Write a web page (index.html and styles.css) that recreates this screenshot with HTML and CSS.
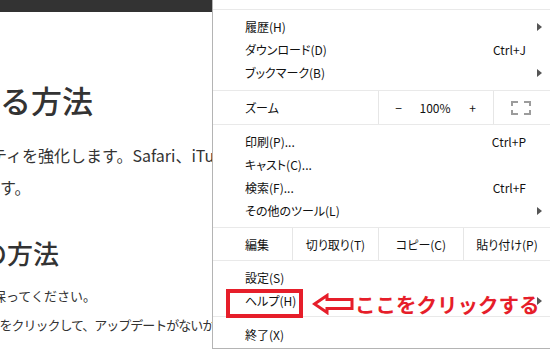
FILE: index.html
```html
<!DOCTYPE html>
<html lang="ja">
<head>
  <meta charset="UTF-8">
  <title>ヘルプの開き方</title>
  <link rel="stylesheet" href="styles.css">
</head>
<body>
<div class="topbar"></div>
<div class="article">
  <h1 class="title">る方法</h1>
  <p class="lead">ティを強化します。Safari、iTunesなどの<br>す。</p>
  <h2 class="subtitle">の方法</h2>
  <p class="note">保ってください。</p>
  <p class="step">]をクリックして、アップデートがないか確認します。</p>
</div>

<div class="menu">
  <div class="group">
    <div class="item sub"><span class="label">履歴(H)</span></div>
    <div class="item"><span class="label">ダウンロード(D)</span><span class="key">Ctrl+J</span></div>
    <div class="item sub"><span class="label">ブックマーク(B)</span></div>
  </div>
  <div class="group row zoom">
    <span class="label">ズーム</span>
    <div class="cell zoomctl">
      <span>−</span><span>100%</span><span>+</span>
    </div>
    <div class="cell full">
      <svg width="20" height="14" viewBox="0 0 20 14"><path d="M1 5V1h6M13 1h6v4M1 9v4h6M13 13h6V9" fill="none" stroke="#9c9c9c" stroke-width="2"/></svg>
    </div>
  </div>
  <div class="group mid">
    <div class="item"><span class="label">印刷(P)...</span><span class="key">Ctrl+P</span></div>
    <div class="item"><span class="label">キャスト(C)...</span></div>
    <div class="item"><span class="label">検索(F)...</span><span class="key">Ctrl+F</span></div>
    <div class="item sub"><span class="label">その他のツール(L)</span></div>
  </div>
  <div class="group row edit">
    <span class="label">編集</span>
    <div class="cell cut">切り取り(T)</div>
    <div class="cell copy">コピー(C)</div>
    <div class="cell paste">貼り付け(P)</div>
  </div>
  <div class="group low">
    <div class="item"><span class="label">設定(S)</span></div>
    <div class="item sub"><span class="label">ヘルプ(H)</span></div>
  </div>
  <div class="group last">
    <div class="item"><span class="label">終了(X)</span></div>
  </div>

  <!-- 注釈 -->
  <div class="callout">
    <div class="redbox"></div>
    <svg class="arrow" width="42" height="22" viewBox="0 0 42 22"><path d="M2.5 11L15 2.5v4h25v9H15v4z" fill="#fff" stroke="#e61e2a" stroke-width="3" stroke-linejoin="miter"/></svg>
    <span class="calltext">ここをクリックする</span>
  </div>
</div>
</body>
</html>
```

FILE: styles.css
```css
* {
  margin: 0;
  padding: 0;
  box-sizing: border-box;
}

body {
  width: 550px;
  height: 350px;
  overflow: hidden;
  position: relative;
  background: #fff;
  color: #333;
  font-family: "Noto Sans CJK JP", "Noto Sans", sans-serif;
}

.topbar {
  height: 12px;
  background: #333;
}

.article {
  white-space: nowrap;
}

.title {
  margin-top: 66px;
  font-size: 31px;
  line-height: 44px;
  font-weight: 500;
}

.lead {
  margin-top: 17px;
  font-size: 16px;
  line-height: 32px;
  text-indent: -9px;
}

.subtitle {
  margin-top: 32px;
  font-size: 26px;
  line-height: 36px;
  font-weight: 500;
  text-indent: -19px;
}

.note {
  margin-top: 12px;
  font-size: 13px;
  line-height: 26px;
  text-indent: -7px;
}

.step {
  margin-top: 3px;
  font-size: 13px;
  line-height: 26px;
  letter-spacing: -1px;
  text-indent: -4px;
}

/* メニュー */
.menu {
  position: absolute;
  top: 0;
  left: 212px;
  width: 338px;
  height: 349px;
  padding-top: 9px;
  background: #fff;
  border-left: 1px solid #b4b4b4;
  border-bottom: 1px solid #b4b4b4;
  color: #111;
  font-size: 12px;
  font-feature-settings: "palt";
}

.group {
  border-top: 1px solid #e9e9e9;
  padding: 5px 0 6px;
}

.group.mid {
  padding: 5px 0;
}

.group.low {
  padding: 5px 0 4px;
}

.group.last {
  padding: 6px 0 2px;
}

.item {
  display: flex;
  align-items: center;
  height: 23px;
  padding: 0 8px 0 32px;
}

.item .label {
  flex: 1;
}

.key {
  margin-right: 16px;
}

.item.sub::after {
  content: "";
  border-left: 5px solid #555;
  border-top: 4px solid transparent;
  border-bottom: 4px solid transparent;
}

.row {
  display: flex;
  padding: 0;
}

.row .label {
  flex: 1;
  padding-left: 32px;
  display: flex;
  align-items: center;
}

.zoom {
  height: 34px;
}

.edit {
  height: 33px;
}

.cell {
  border-left: 1px solid #e6e6e6;
  display: flex;
  align-items: center;
  justify-content: center;
}

.zoomctl {
  width: 115px;
  display: grid;
  grid-template-columns: 40px 33px 42px;
  text-align: center;
}

.full {
  width: 57px;
  padding-right: 2px;
}

.cut {
  width: 86px;
}

.copy {
  width: 85px;
}

.paste {
  width: 87px;
}

/* 注釈 */
.callout {
  position: absolute;
  left: 13px;
  top: 289px;
  display: flex;
  align-items: center;
}

.redbox {
  width: 77px;
  height: 29px;
  border: 4px solid #e61e2a;
}

.arrow {
  margin-left: 9px;
}

.calltext {
  margin-left: 1px;
  color: #e61e2a;
  font-size: 20.5px;
  font-weight: bold;
  line-height: 22px;
  font-feature-settings: normal;
}
```
